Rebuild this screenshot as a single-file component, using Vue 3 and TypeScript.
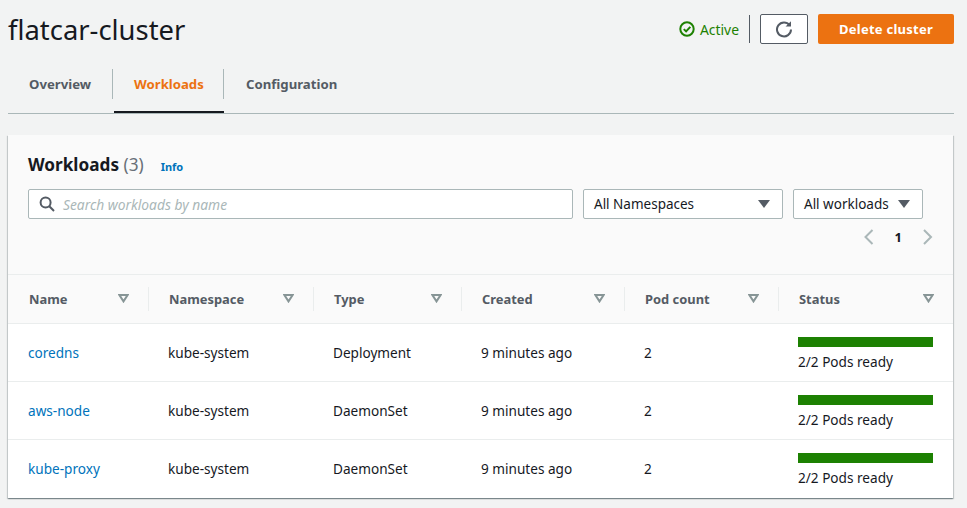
<script setup lang="ts">
const tabs = [
  { label: 'Overview', active: false },
  { label: 'Workloads', active: true },
  { label: 'Configuration', active: false },
]
const columns = ['Name', 'Namespace', 'Type', 'Created', 'Pod count', 'Status']
const rows = [
  { name: 'coredns', ns: 'kube-system', type: 'Deployment', created: '9 minutes ago', pods: 2 },
  { name: 'aws-node', ns: 'kube-system', type: 'DaemonSet', created: '9 minutes ago', pods: 2 },
  { name: 'kube-proxy', ns: 'kube-system', type: 'DaemonSet', created: '9 minutes ago', pods: 2 },
]
</script>

<template>
  <div class="page">
    <header class="top">
      <h1 class="title">flatcar-cluster</h1>
      <div class="actions">
        <span class="status">
          <svg width="16" height="16" viewBox="0 0 16 16" fill="none" stroke="#1d8102" stroke-width="2">
            <circle cx="8" cy="8" r="6.7" />
            <path d="M4.8 8.1l2.3 2.3 4.2-4.6" />
          </svg>
          Active
        </span>
        <span class="vline"></span>
        <button class="refresh" aria-label="Refresh">
          <svg width="18" height="18" viewBox="0 0 18 18" fill="none" stroke="#545b64" stroke-width="2">
            <path d="M14.6 5.2A7 7 0 1 0 16 9.5" />
            <path d="M16 1.2v5.4h-5.4z" fill="#545b64" stroke="none" />
          </svg>
        </button>
        <button class="primary">Delete cluster</button>
      </div>
    </header>

    <nav class="tabs">
      <div v-for="(t, i) in tabs" :key="t.label" class="tab" :class="{ active: t.active, first: i === 0 }">
        <span>{{ t.label }}</span>
      </div>
    </nav>

    <section class="card">
      <div class="card-head">
        <div class="heading">
          <h2>Workloads <span class="count">(3)</span></h2>
          <a class="info">Info</a>
        </div>
        <div class="filters">
          <div class="search">
            <svg width="16" height="16" viewBox="0 0 16 16" fill="none" stroke="#545b64" stroke-width="2">
              <circle cx="6.6" cy="6.6" r="5" />
              <path d="M10.3 10.3l4.7 4.7" />
            </svg>
            <span class="placeholder">Search workloads by name</span>
          </div>
          <div class="select ns">
            <span>All Namespaces</span>
            <i class="caret"></i>
          </div>
          <div class="select wl">
            <span>All workloads</span>
            <i class="caret"></i>
          </div>
        </div>
        <div class="pager">
          <svg width="12" height="16" viewBox="0 0 12 16" fill="none" stroke="#aab7b8" stroke-width="2"><path d="M8.5 1L1.5 8l7 7" /></svg>
          <span class="page-num">1</span>
          <svg width="12" height="16" viewBox="0 0 12 16" fill="none" stroke="#aab7b8" stroke-width="2"><path d="M3 1l7 7-7 7" /></svg>
        </div>
      </div>

      <div class="grid head-row">
        <div v-for="c in columns" :key="c" class="th">
          <span>{{ c }}</span>
          <svg class="sort" width="11" height="9" viewBox="0 0 11 9" fill="none" stroke="#879596" stroke-width="2"><path d="M1.4 1h8.2L5.5 7.4z" /></svg>
        </div>
      </div>
      <div v-for="r in rows" :key="r.name" class="grid row">
        <div class="td"><a class="link">{{ r.name }}</a></div>
        <div class="td">{{ r.ns }}</div>
        <div class="td">{{ r.type }}</div>
        <div class="td">{{ r.created }}</div>
        <div class="td">{{ r.pods }}</div>
        <div class="td status-cell">
          <div class="bar"></div>
          <div class="ready">2/2 Pods ready</div>
        </div>
      </div>
    </section>
  </div>
</template>

<style>
html, body { margin: 0; background: #f2f3f3; }
</style>

<style scoped>
.page {
  width: 967px;
  height: 508px;
  overflow: hidden;
  box-sizing: border-box;
  padding: 0 13px 0 8px;
  background: #f2f3f3;
  font-family: "Noto Sans", "Open Sans", sans-serif;
  font-size: 13.6px;
  color: #16191f;
}
.top {
  height: 58px;
  display: flex;
  align-items: center;
  justify-content: space-between;
}
.title {
  margin: 0;
  font-size: 27.4px;
  font-weight: 400;
  color: #16191f;
}
.actions {
  display: flex;
  align-items: center;
  height: 30px;
}
.status {
  display: flex;
  align-items: center;
  gap: 5px;
  color: #1d8102;
  font-size: 13.9px;
}
.vline {
  width: 1px;
  height: 28px;
  margin: 0 10px;
  background: #545b64;
}
.refresh {
  width: 48px;
  height: 30px;
  box-sizing: border-box;
  margin-right: 10px;
  padding: 0;
  display: flex;
  align-items: center;
  justify-content: center;
  background: #fff;
  border: 1px solid #545b64;
  border-radius: 2px;
}
.primary {
  width: 136px;
  height: 30px;
  padding: 0;
  background: #ec7211;
  border: 0;
  border-radius: 2px;
  color: #fff;
  font: 700 13px "Noto Sans", sans-serif;
  letter-spacing: 0.25px;
}
.tabs {
  display: flex;
  height: 55px;
  margin-bottom: 21px;
  border-bottom: 1px solid #aab7b8;
}
.tab {
  position: relative;
  height: 55px;
  box-sizing: border-box;
  padding: 17px 22px 0;
  font-weight: 700;
  font-size: 13.2px;
  color: #545b64;
}
.tab.first { flex: 0 0 106px; padding-left: 21px; padding-right: 0; }
.tab span { display: block; line-height: 18px; }
.tab.active {
  flex: 0 0 110px;
  padding-left: 20px;
  padding-right: 0;
  color: #ec7211;
  border-bottom: 2px solid #16191f;
}
.tab.active::before,
.tab.active::after {
  content: "";
  position: absolute;
  top: 11px;
  width: 1px;
  height: 30px;
  background: #aab7b8;
}
.tab.active::before { left: -2px; }
.tab.active::after { right: 0; }
.card {
  width: 945px;
  height: 363px;
  background: #fff;
  box-shadow: 0 1px 1px 0 rgba(0, 28, 36, 0.3), 1px 1px 1px 0 rgba(0, 28, 36, 0.15), -1px 1px 1px 0 rgba(0, 28, 36, 0.15);
}
.card-head {
  height: 140px;
  box-sizing: border-box;
  padding: 18px 20px 0;
  background: #fafafa;
  border-bottom: 1px solid #eaeded;
}
.heading {
  display: flex;
  align-items: baseline;
  height: 24px;
  margin-bottom: 12px;
}
h2 {
  margin: 0;
  font-size: 17.2px;
  font-weight: 700;
  line-height: 24px;
}
.count { font-weight: 400; color: #687078; }
.info {
  margin-left: 17px;
  font-size: 11px;
  font-weight: 700;
  color: #0073bb;
}
.filters {
  display: flex;
  gap: 10px;
  height: 30px;
}
.search {
  width: 545px;
  box-sizing: border-box;
  display: flex;
  align-items: center;
  gap: 8px;
  padding-left: 10px;
  background: #fff;
  border: 1px solid #aab7b8;
  border-radius: 2px;
}
.placeholder {
  font-style: italic;
  color: #aab7b8;
  font-size: 13.8px;
}
.select {
  box-sizing: border-box;
  display: flex;
  align-items: center;
  justify-content: space-between;
  padding: 0 12px 0 10px;
  background: #fff;
  border: 1px solid #aab7b8;
  border-radius: 2px;
  font-size: 13.5px;
}
.ns { width: 200px; }
.wl { width: 130px; margin-left: 0; }
.caret {
  width: 0;
  height: 0;
  border-left: 6px solid transparent;
  border-right: 6px solid transparent;
  border-top: 8px solid #545b64;
}
.pager {
  display: flex;
  justify-content: flex-end;
  align-items: center;
  gap: 19px;
  height: 16px;
  margin-top: 10px;
}
.page-num { font-weight: 700; font-size: 13px; }
.grid {
  display: grid;
  grid-template-columns: 140px 165px 148px 163px 154px 175px;
}
.head-row {
  height: 49px;
  background: #fafafa;
  border-bottom: 1px solid #eaeded;
  box-sizing: border-box;
}
.th {
  position: relative;
  display: flex;
  align-items: center;
  justify-content: space-between;
  padding: 0 19px 0 21px;
  font-weight: 700;
  font-size: 12.9px;
  color: #545b64;
}
.sort { margin-top: -2px; }
.th + .th::before {
  content: "";
  position: absolute;
  left: 0;
  top: 12px;
  width: 1px;
  height: 24px;
  background: #eaeded;
}
.row {
  height: 58px;
  box-sizing: border-box;
  border-bottom: 1px solid #eaeded;
}
.row:last-child { border-bottom-color: transparent; }
.td {
  display: flex;
  align-items: center;
  padding-left: 20px;
}
.link { color: #0073bb; }
.status-cell {
  flex-direction: column;
  align-items: flex-start;
  justify-content: flex-start;
  padding-top: 13px;
}
.bar {
  width: 135px;
  height: 10px;
  background: #1d8102;
}
.ready { margin-top: 6px; line-height: 18px; }
</style>
